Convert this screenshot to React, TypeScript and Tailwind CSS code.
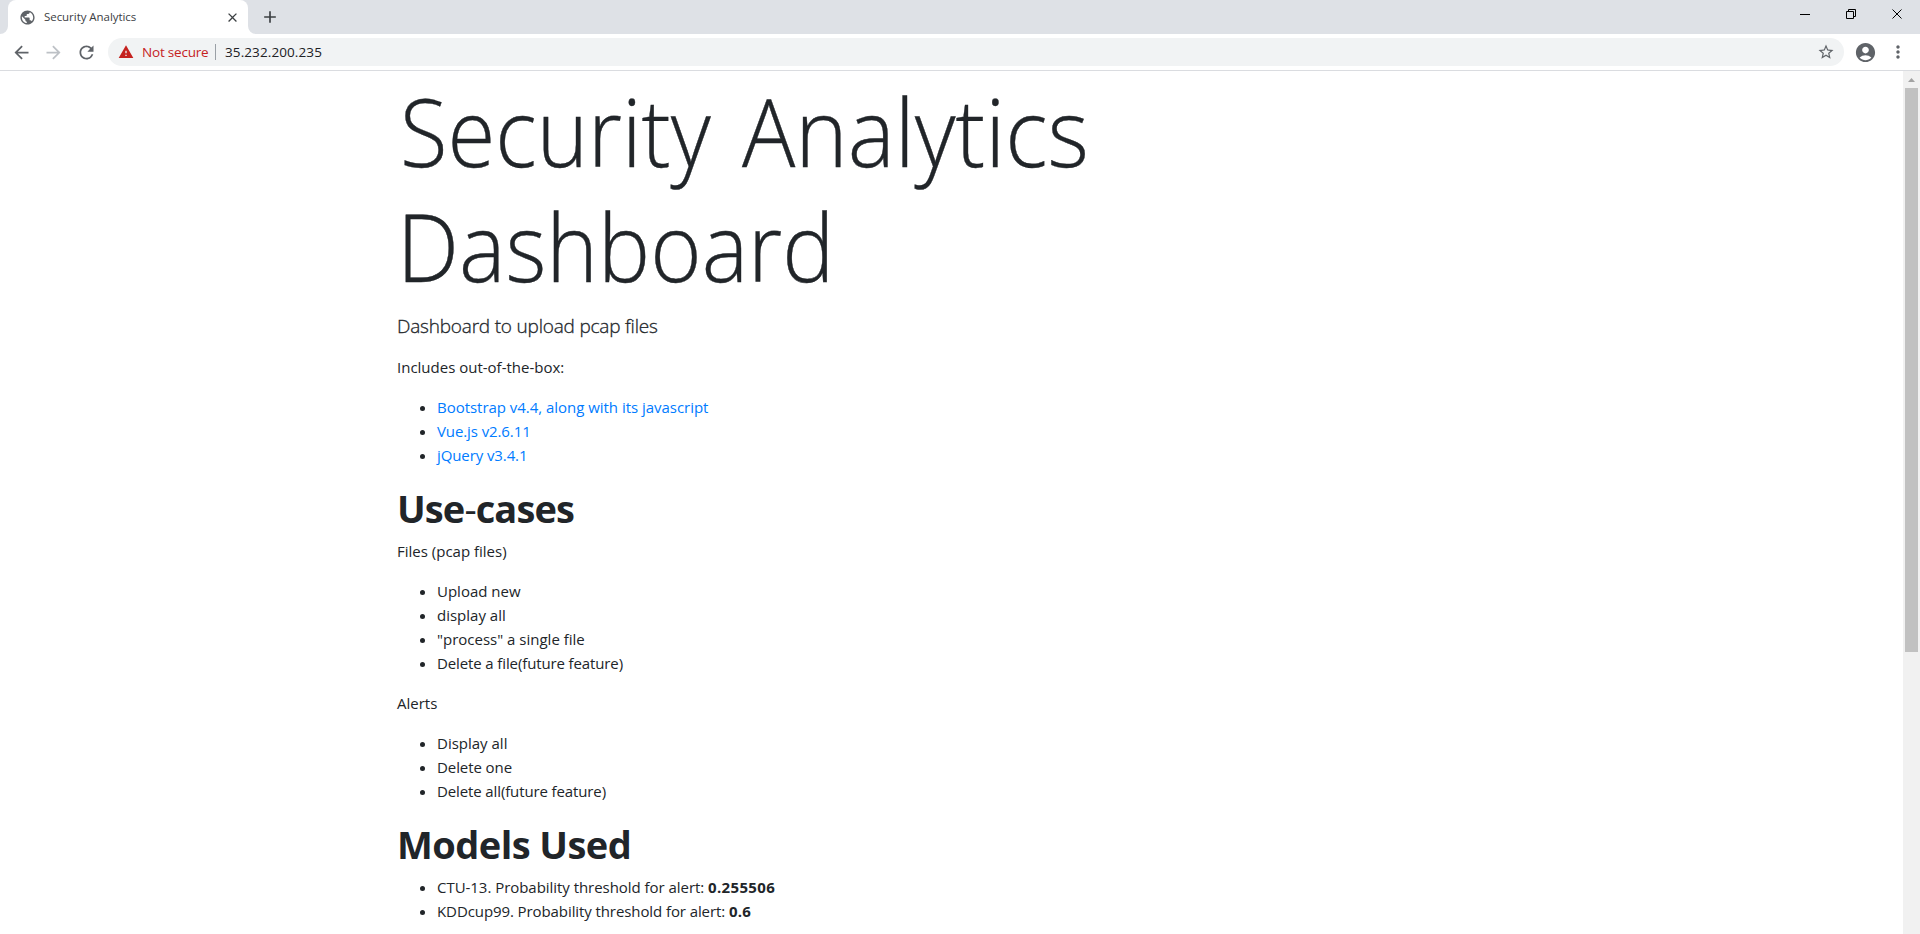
import type { ReactNode } from "react";
import { MdPublic, MdClose, MdAdd, MdArrowBack, MdArrowForward, MdRefresh, MdWarning, MdStarBorder, MdAccountCircle, MdMoreVert } from "react-icons/md";

function TabStrip() {
  return (
    <div className="flex h-[34px] shrink-0 items-stretch bg-[#dee1e6]">
      <svg className="h-[34px] w-2" viewBox="0 0 8 34"><path d="M8 34H0a8 8 0 0 0 8-8Z" fill="#fff" /></svg>
      <div className="flex w-[240px] items-center rounded-t-lg bg-white pl-[11px] pr-2">
        <MdPublic className="size-[17px] text-[#5f6368]" />
        <span className="ml-2 flex-1 whitespace-nowrap text-[11.5px] tracking-[-0.05px] text-[#3c4043]">Security Analytics</span>
        <MdClose className="size-[15px] text-[#3c4043]" />
      </div>
      <svg className="h-[34px] w-2" viewBox="0 0 8 34"><path d="M0 34H8a8 8 0 0 1-8-8Z" fill="#fff" /></svg>
      <div className="ml-1 flex items-center"><MdAdd className="size-5 text-[#3c4043]" /></div>
      <div className="ml-auto flex pr-[18px]">
        <svg className="h-[34px] w-[102px]" viewBox="0 0 102 34" fill="none" stroke="#000" strokeWidth="1">
          <path d="M0 14.5h10M46.5 11.5h7v7h-7zM48.5 11V9.5h7v7h-2M92.5 9.5l9 9M101.5 9.5l-9 9" />
        </svg>
      </div>
    </div>
  );
}

function Toolbar() {
  return (
    <div className="flex h-[37px] shrink-0 items-center border-b border-[#dadce0] bg-white pl-[11px]">
      <MdArrowBack className="size-[21px] text-[#5f6368]" />
      <MdArrowForward className="ml-[11px] size-[21px] text-[#bdc1c6]" />
      <MdRefresh className="ml-[12px] size-[21px] text-[#5f6368]" />
      <div className="ml-[11px] flex h-7 w-[1736px] items-center rounded-full bg-[#f1f3f4] pl-[10px] pr-[9px] text-[13.5px]">
        <MdWarning className="size-4 text-[#c5221f]" />
        <span className="ml-2 w-[73px] whitespace-nowrap tracking-[-0.2px] text-[#c5221f]">Not secure</span>
        <span className="h-4 w-px bg-[#9aa0a6]" />
        <span className="ml-[9px] flex-1 tracking-[0.1px] text-[#202124]">35.232.200.235</span>
        <MdStarBorder className="size-[18px] text-[#5f6368]" />
      </div>
      <MdAccountCircle className="ml-[10px] size-[23px] text-[#5f6368]" />
      <MdMoreVert className="ml-[11px] size-5 text-[#5f6368]" />
    </div>
  );
}

function List({ children }: { children: ReactNode }) {
  return <ul className="mb-4 list-disc pl-10">{children}</ul>;
}

function Heading({ children }: { children: ReactNode }) {
  return <h2 className="mb-2 h-12 pt-px text-[38px] font-bold leading-[48px]">{children}</h2>;
}

function Scrollbar() {
  return (
    <div className="flex w-[17px] shrink-0 flex-col items-center bg-[#f1f1f1]">
      <svg className="h-[17px] w-[17px] shrink-0" viewBox="0 0 17 17"><path d="M5 11l3.5-4 3.5 4z" fill="#a3a3a3" /></svg>
      <div className="h-[564px] w-[13px] bg-[#c1c1c1]" />
    </div>
  );
}

export default function App() {
  return (
    <div className="flex h-[934px] w-[1920px] flex-col overflow-hidden bg-white font-['Open_Sans',sans-serif]">
      <TabStrip />
      <Toolbar />
      <div className="flex min-h-0 flex-1">
        <main className="min-w-0 flex-1 pl-[397px] text-[15px] leading-6 text-[#212529]">
          <h1 className="mb-2 h-[230.4px] whitespace-nowrap pt-[3px] text-[94px] font-light leading-[115.2px] [-webkit-text-stroke:0.4px_#212529]">
            <span className="block">
              <span className="inline-block origin-left translate-x-[3px] scale-x-[0.926]">Security</span>{" "}
              <span className="inline-block origin-left translate-x-[-15px] scale-x-[0.944]">Analytics</span>
            </span>
            <span className="block origin-left scale-x-[0.933]">Dashboard</span>
          </h1>
          <p className="mb-4 h-[30px] pt-[2px] text-[19px] font-light leading-[30px] tracking-[-0.2px] [-webkit-text-stroke:0.3px_#212529]">Dashboard to upload pcap files</p>
          <p className="mb-4">Includes out-of-the-box:</p>
          <List>
            <li><a className="tracking-[-0.03px] text-[#007bff]">Bootstrap v4.4, along with its javascript</a></li>
            <li><a className="tracking-[-0.1px] text-[#007bff]">Vue.js v2.6.11</a></li>
            <li><a className="tracking-[-0.1px] text-[#007bff]">jQuery v3.4.1</a></li>
          </List>
          <Heading><span className="tracking-[-0.9px]">Use<span className="font-normal">-</span>cases</span></Heading>
          <p className="mb-4">Files (pcap files)</p>
          <List>
            <li>Upload new</li>
            <li>display all</li>
            <li>"process" a single file</li>
            <li className="tracking-[-0.12px]">Delete a file(future feature)</li>
          </List>
          <p className="mb-4">Alerts</p>
          <List>
            <li>Display all</li>
            <li className="tracking-[-0.08px]">Delete one</li>
            <li className="tracking-[-0.12px]">Delete all(future feature)</li>
          </List>
          <Heading><span className="tracking-[-0.55px]">Models Used</span></Heading>
          <List>
            <li><span className="tracking-[-0.04px]">CTU-13. Probability threshold for alert: </span><b className="tracking-[0.33px]">0.255506</b></li>
            <li><span className="tracking-[-0.09px]">KDDcup99. Probability threshold for alert: </span><b className="tracking-[0.19px]">0.6</b></li>
          </List>
        </main>
        <Scrollbar />
      </div>
    </div>
  );
}
